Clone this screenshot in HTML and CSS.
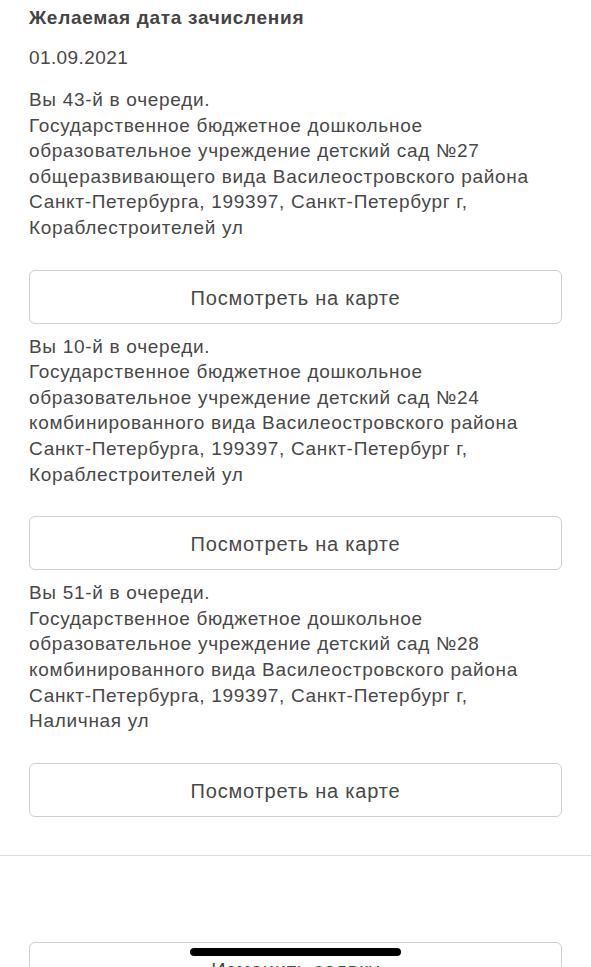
FILE: index.html
```html
<!DOCTYPE html>
<html lang="ru">
<head>
<meta charset="utf-8">
<link rel="stylesheet" href="styles.css">
</head>
<body>
<div class="page">
  <div class="content">
    <h2 class="title">Желаемая дата зачисления</h2>
    <p class="date">01.09.2021</p>
    <div class="item">
      <p class="text">Вы 43-й в очереди.<br>Государственное бюджетное дошкольное<br>образовательное учреждение детский сад №27<br>общеразвивающего вида Василеостровского района<br>Санкт-Петербурга, 199397, Санкт-Петербург г,<br>Кораблестроителей ул</p>
      <button class="btn">Посмотреть на карте</button>
    </div>
    <div class="item">
      <p class="text">Вы 10-й в очереди.<br>Государственное бюджетное дошкольное<br>образовательное учреждение детский сад №24<br>комбинированного вида Василеостровского района<br>Санкт-Петербурга, 199397, Санкт-Петербург г,<br>Кораблестроителей ул</p>
      <button class="btn">Посмотреть на карте</button>
    </div>
    <div class="item">
      <p class="text">Вы 51-й в очереди.<br>Государственное бюджетное дошкольное<br>образовательное учреждение детский сад №28<br>комбинированного вида Василеостровского района<br>Санкт-Петербурга, 199397, Санкт-Петербург г,<br>Наличная ул</p>
      <button class="btn">Посмотреть на карте</button>
    </div>
  </div>
  <hr class="divider">
  <div class="footer">
    <button class="btn">Изменить заявку</button>
  </div>
  <div class="home-bar"></div>
</div>
</body>
</html>
```
FILE: styles.css
```css
* { box-sizing: border-box; }
html, body { margin: 0; padding: 0; background: #fff; }
body {
  font-family: "Liberation Sans", Arial, sans-serif;
  color: #484848;
  width: 591px;
  height: 967px;
  overflow: hidden;
}
.page { position: relative; height: 967px; overflow: hidden; }
.content { padding: 6px 29px 0 29px; }
.title {
  margin: 0;
  font-size: 19px;
  font-weight: bold;
  line-height: 24px;
  letter-spacing: 0.7px;
  color: #444;
}
.date {
  margin: 16px 0 0 0;
  font-size: 19px;
  line-height: 24px;
  letter-spacing: 0.4px;
}
.item { display: flex; flex-direction: column; }
.text {
  margin: 17px 0 0 0;
  font-size: 19px;
  line-height: 25.6px;
  letter-spacing: 0.7px;
  white-space: nowrap;
}
.item + .item .text { margin-top: 10px; }
.btn {
  display: block;
  width: 100%;
  height: 54px;
  margin-top: 29px;
  background: #fff;
  border: 1px solid #cfcfcf;
  border-radius: 6px;
  font-family: "Liberation Sans", Arial, sans-serif;
  font-size: 20px;
  letter-spacing: 0.8px;
  color: #484848;
  padding: 3px 0 0 0;
}
.divider {
  margin: 38px 0 0 0;
  border: 0;
  border-top: 1px solid #dcdcdc;
}
.footer { padding: 86px 29px 0 29px; }
.footer .btn { margin-top: 0; }
.home-bar {
  position: absolute;
  left: 190px;
  top: 948px;
  width: 211px;
  height: 8px;
  border-radius: 4px;
  background: #000;
}
```
